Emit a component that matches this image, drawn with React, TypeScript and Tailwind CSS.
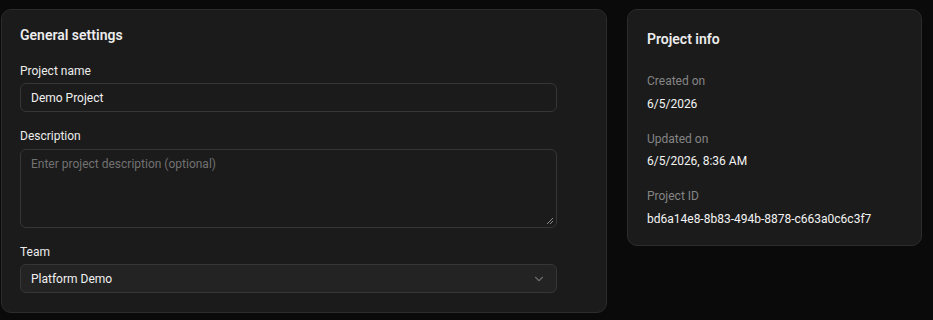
import React from "react";

function ChevronDown() {
  return (
    <svg width="14" height="14" viewBox="0 0 24 24" fill="none" stroke="#6b6b6b" strokeWidth="2" strokeLinecap="round" strokeLinejoin="round">
      <path d="m6 9 6 6 6-6" />
    </svg>
  );
}

export default function App() {
  return (
    <div
      className="w-[933px] h-[320px] bg-[#0a0a0a] overflow-hidden flex items-start gap-5 pl-px pt-[9px]"
      style={{ fontFamily: "Roboto, 'Noto Sans', sans-serif" }}
    >
      <div className="w-[606px] h-[304px] shrink-0 rounded-[10px] border border-[#2c2c2c] bg-[#1b1b1b] px-[18px] pt-[16px]">
        <h2 className="text-[14px] leading-[18px] font-semibold text-[#ececec]">General settings</h2>
        <div className="w-[537px] mt-[19px] flex flex-col">
          <label className="text-[12px] leading-[16px] font-normal text-[#ececec]">Project name</label>
          <div className="mt-[4px] h-[29px] rounded-[6px] border border-[#363636] bg-[#1b1b1b] flex items-center px-[10px] text-[12px] text-[#f0f0f0]">
            Demo Project
          </div>
          <label className="mt-[16px] text-[12px] leading-[16px] font-normal text-[#ececec]">Description</label>
          <div className="mt-[5px] h-[79px] rounded-[6px] border border-[#363636] bg-[#1b1b1b] px-[10px] pt-[5px] text-[12px] text-[#727272] relative">
            Enter project description (optional)
            <svg className="absolute right-[2px] bottom-[2px]" width="8" height="8" viewBox="0 0 8 8">
              <path d="M7 1 L1 7 M7 4 L4 7" stroke="#8a8a8a" strokeWidth="1" />
            </svg>
          </div>
          <label className="mt-[16px] text-[12px] leading-[16px] font-normal text-[#ececec]">Team</label>
          <div className="mt-[4px] h-[29px] rounded-[6px] border border-[#363636] bg-[#232323] flex items-center justify-between pl-[10px] pr-[10px] text-[12px] text-[#f0f0f0]">
            <span>Platform Demo</span>
            <ChevronDown />
          </div>
        </div>
      </div>
      <div className="w-[295px] h-[237px] shrink-0 rounded-[10px] border border-[#2c2c2c] bg-[#1b1b1b] px-[19px] pt-[19px]">
        <h2 className="text-[14px] leading-[20px] font-semibold text-[#ececec]">Project info</h2>
        <div className="mt-[24px] flex flex-col">
          <div className="flex flex-col gap-[7px]">
            <div className="text-[12px] leading-[16px] text-[#858585]">Created on</div>
            <div className="text-[12px] leading-[16px] font-normal text-[#f4f4f4]">6/5/2026</div>
          </div>
          <div className="mt-[19px] flex flex-col gap-[6px]">
            <div className="text-[12px] leading-[16px] text-[#858585]">Updated on</div>
            <div className="text-[12px] leading-[16px] font-normal text-[#f4f4f4]">6/5/2026, 8:36 AM</div>
          </div>
          <div className="mt-[19px] flex flex-col gap-[7px]">
            <div className="text-[12px] leading-[16px] text-[#858585]">Project ID</div>
            <div className="text-[12px] leading-[16px] font-normal text-[#f4f4f4]">bd6a14e8-8b83-494b-8878-c663a0c6c3f7</div>
          </div>
        </div>
      </div>
    </div>
  );
}
